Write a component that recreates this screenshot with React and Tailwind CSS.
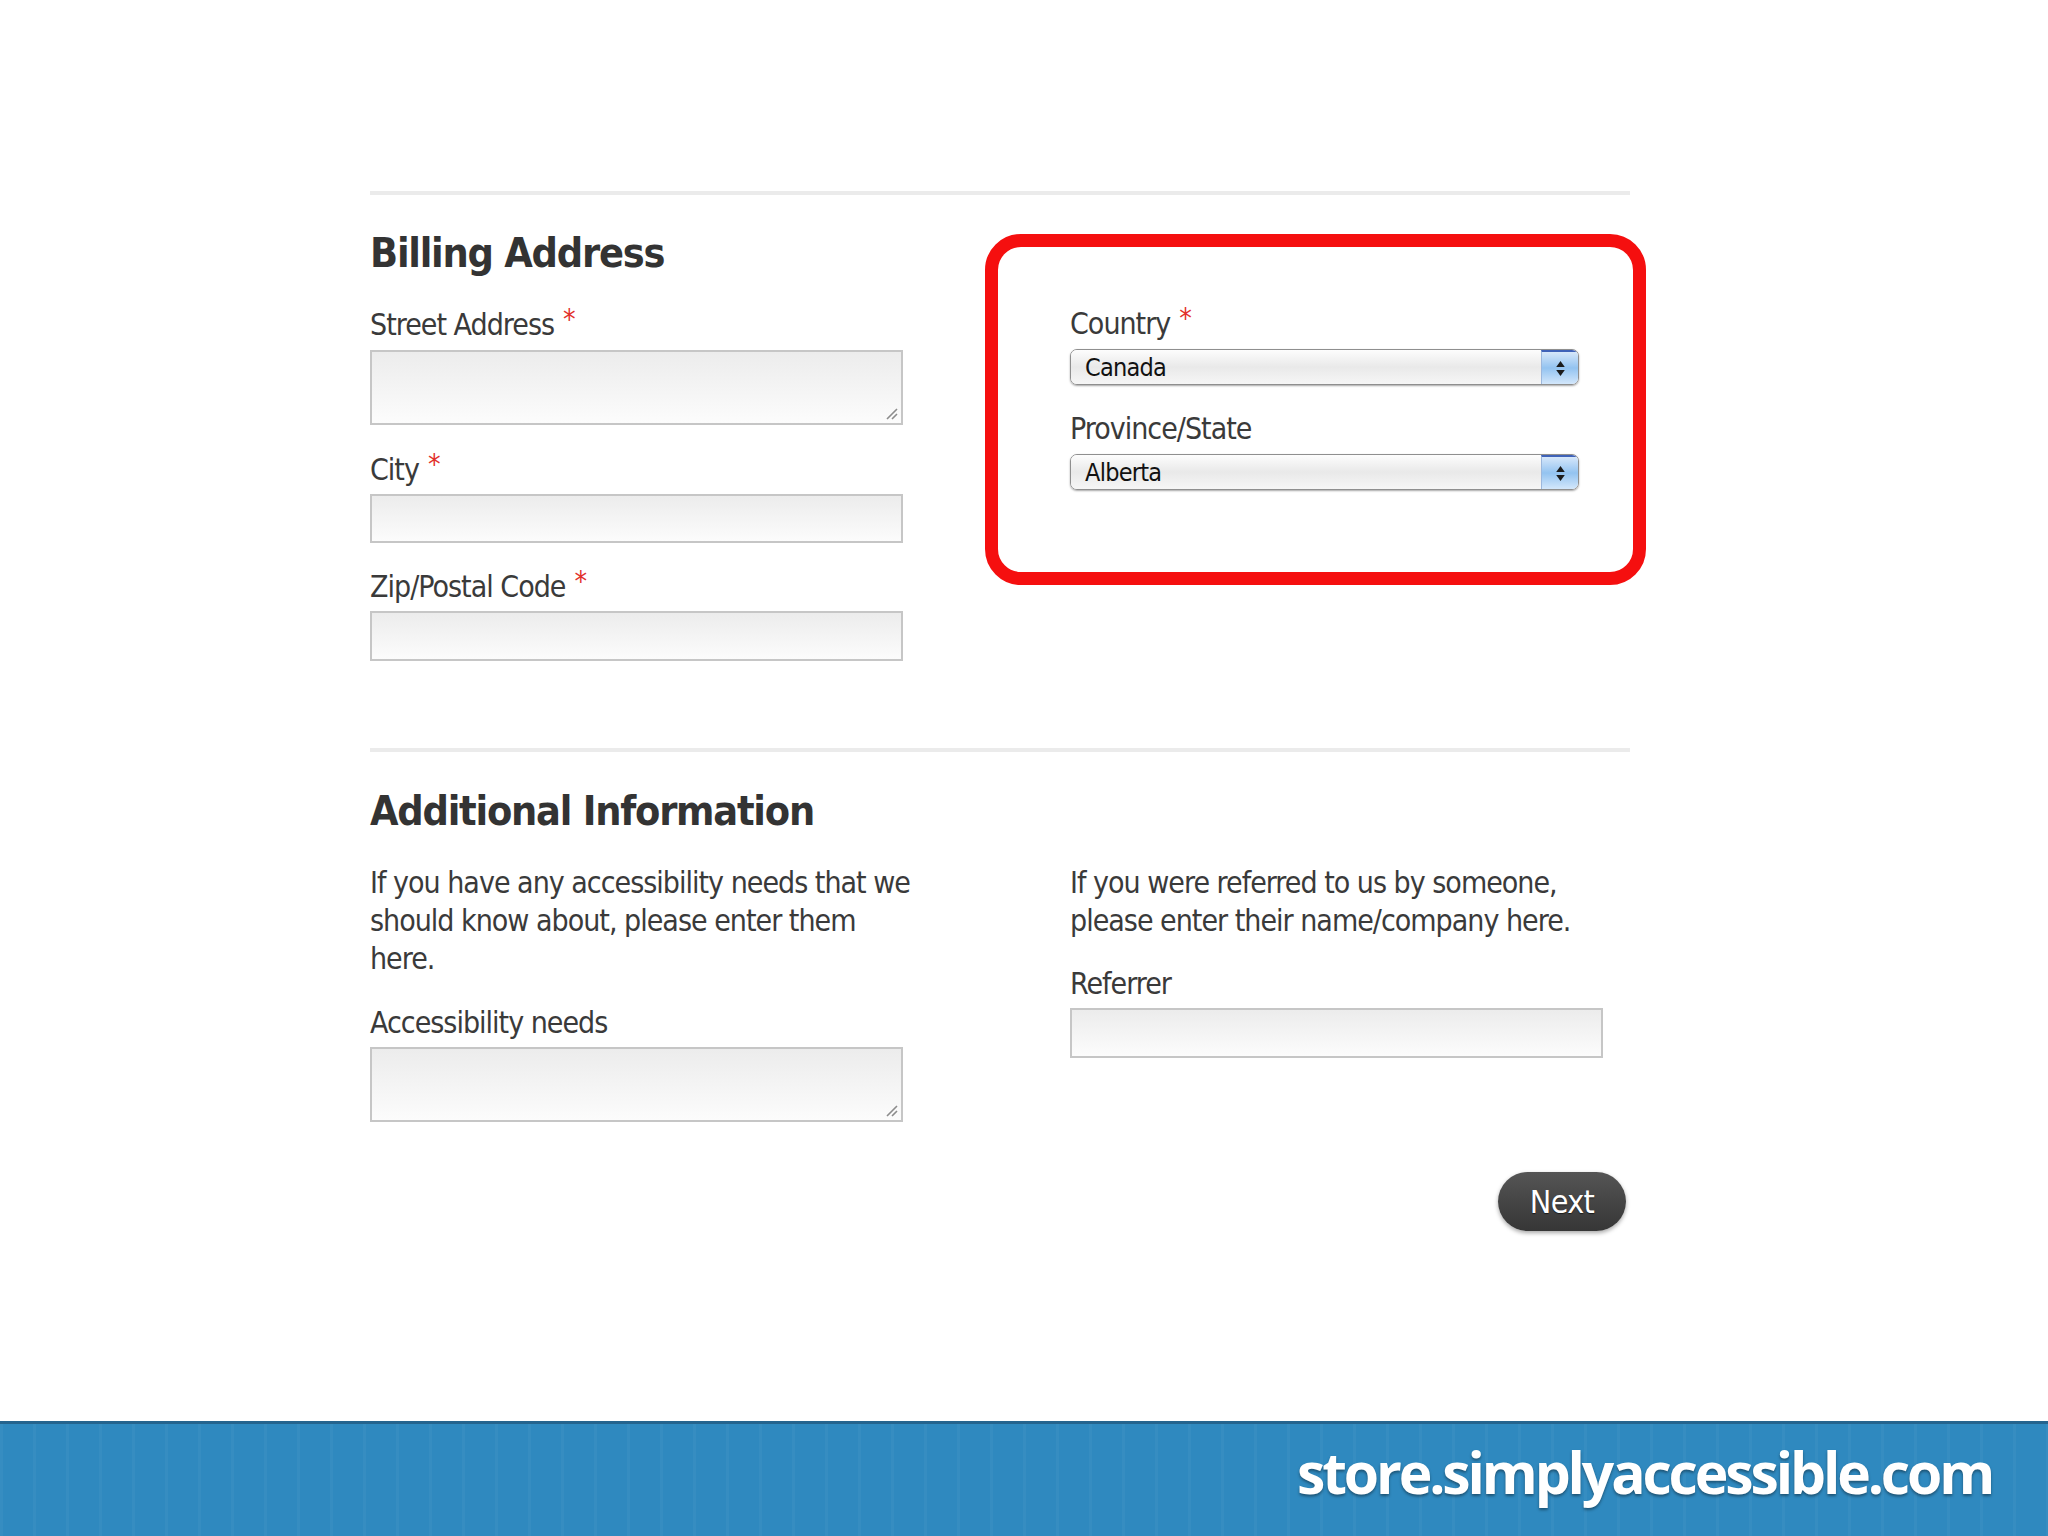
import React from 'react';

const font = 'font-["DejaVu_Sans_Condensed","DejaVu_Sans",sans-serif]';

const Required = () => (
    <span className="ml-[9px] text-[28px] leading-none text-[#e2312b] align-top">*</span>
);

const Label = ({ children, required }) => (
    <label className="block text-[30px] leading-[38px] tracking-[-0.033em] text-[#3a3a3a]">
        {children}
        {required && <Required />}
    </label>
);

const TextInput = ({ className = '' }) => (
    <input
        type="text"
        className={`block w-[533px] border-2 border-[#c6c6c6] bg-linear-to-b from-[#ececec] to-[#fcfcfc] outline-none ${className}`}
    />
);

// textarea with the little resize grip in the corner
const TextArea = ({ className = '' }) => (
    <div className={`relative w-[533px] ${className}`}>
        <textarea className="block h-[75px] w-full resize-none border-2 border-[#c6c6c6] bg-linear-to-b from-[#ececec] to-[#fcfcfc] outline-none" />
        <svg className="absolute bottom-[5px] right-[5px]" width="14" height="14" viewBox="0 0 14 14">
            <path d="M3 13 L13 3 M8 13 L13 8" stroke="#8c8c8c" strokeWidth="1.6" />
        </svg>
    </div>
);

const AquaSelect = ({ value }) => (
    <div className="flex h-[36px] w-[509px] overflow-hidden rounded-[7px] border border-[#8f8f8f] shadow-[0_1px_2px_rgba(0,0,0,0.35)]">
        <div className="flex flex-1 items-center bg-linear-to-b from-[#fdfdfd] via-[#e9e9e9] to-[#f6f6f6] pl-[14px] text-[25px] leading-none tracking-[-0.03em] text-[#111]">
            {value}
        </div>
        <div className="flex w-[37px] flex-col items-center justify-center gap-[3px] border-t-2 border-l border-t-[#3f62b8] border-l-[#9cb7dc] bg-linear-to-b from-[#d6e7fa] via-[#93c3f0] to-[#d3e7fb]">
            <svg width="9" height="6" viewBox="0 0 10 7"><path d="M5 0 L10 7 L0 7 Z" fill="#1b1b1b" /></svg>
            <svg width="9" height="6" viewBox="0 0 10 7"><path d="M0 0 L10 0 L5 7 Z" fill="#1b1b1b" /></svg>
        </div>
    </div>
);

const Divider = () => <div className="h-[4px] w-[1260px] bg-[#ebebeb]" />;

export default function App() {
    return (
        <div className={`flex h-screen flex-col bg-white ${font}`}>
            <main className="flex-1 pl-[370px] pt-[191px]">
                <Divider />

                {/* Billing address */}
                <div className="grid grid-cols-[615px_661px] items-start">
                    <div className="pt-[38px]">
                        <h2 className="text-[41px] font-bold leading-none tracking-[-0.03em] text-[#333]">Billing Address</h2>

                        <div className="mt-[32px]">
                            <Label required>Street Address</Label>
                            <TextArea className="mt-[6px]" />
                        </div>

                        <div className="mt-[26px]">
                            <Label required>City</Label>
                            <TextInput className="mt-[5px] h-[49px]" />
                        </div>

                        <div className="mt-[25px]">
                            <Label required>Zip/Postal Code</Label>
                            <TextInput className="mt-[5px] h-[50px]" />
                        </div>
                    </div>

                    <div className="mt-[39px] rounded-[36px] border-[13px] border-[#f50f0f] pl-[72px] pr-[54px] pt-[58px] pb-[82px]">
                        <Label required>Country</Label>
                        <div className="mt-[6px]">
                            <AquaSelect value="Canada" />
                        </div>

                        <div className="mt-[25px]">
                            <Label>Province/State</Label>
                            <div className="mt-[6px]">
                                <AquaSelect value="Alberta" />
                            </div>
                        </div>
                    </div>
                </div>

                <div className="mt-[87px]">
                    <Divider />
                </div>

                {/* Additional information */}
                <div className="w-[1260px] pt-[39px]">
                    <h2 className="text-[41px] font-bold leading-none tracking-[-0.03em] text-[#333]">Additional Information</h2>

                    <div className="mt-[32px] grid grid-cols-[700px_1fr] items-start">
                        <div>
                            <p className="w-[548px] text-[30px] leading-[38px] tracking-[-0.033em] text-[#3a3a3a]">
                                If you have any accessibility needs that we should know about, please enter them here.
                            </p>
                            <div className="mt-[26px]">
                                <Label>Accessibility needs</Label>
                                <TextArea className="mt-[5px]" />
                            </div>
                        </div>
                        <div>
                            <p className="w-[525px] text-[30px] leading-[38px] tracking-[-0.033em] text-[#3a3a3a]">
                                If you were referred to us by someone, please enter their name/company here.
                            </p>
                            <div className="mt-[25px]">
                                <Label>Referrer</Label>
                                <TextInput className="mt-[5px] h-[50px]" />
                            </div>
                        </div>
                    </div>

                    <div className="mt-[50px] flex justify-end pr-[4px]">
                        <button className="h-[59px] w-[128px] rounded-full bg-linear-to-b from-[#555] to-[#363636] text-[32px] leading-none tracking-[-0.02em] text-white shadow-[0_2px_4px_rgba(0,0,0,0.35)] [text-shadow:0_1px_1px_rgba(0,0,0,0.6)]">
                            Next
                        </button>
                    </div>
                </div>
            </main>

            <footer className="flex h-[115px] items-center justify-end border-t-[3px] border-[#25648e] bg-[#2f89bf] bg-[repeating-linear-gradient(90deg,rgba(255,255,255,0.035)_0px,rgba(255,255,255,0.035)_3px,transparent_3px,transparent_33px)] pb-[14px] pr-[56px]">
                <span className='font-["Open_Sans",sans-serif] text-[57px] font-bold tracking-[-0.055em] text-white [text-shadow:0_2px_3px_rgba(0,0,0,0.4)]'>
                    store.simplyaccessible.com
                </span>
            </footer>
        </div>
    );
}
